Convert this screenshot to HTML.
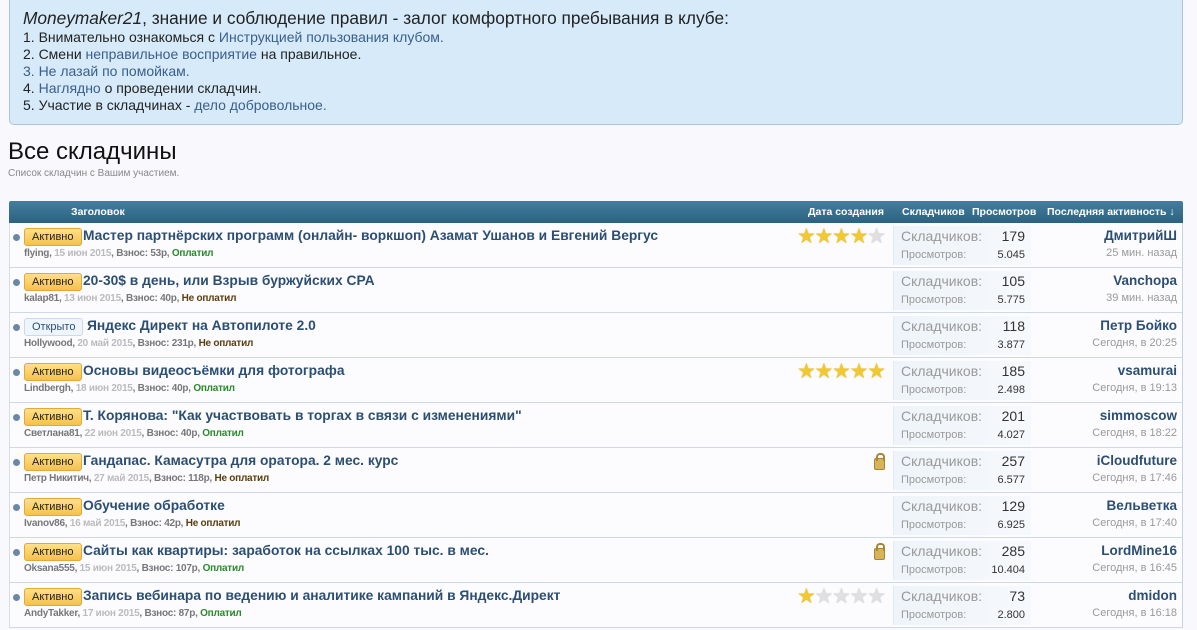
<!DOCTYPE html>
<html><head><meta charset="utf-8"><style>
*{box-sizing:border-box;margin:0;padding:0}
body{width:1197px;height:630px;overflow:hidden;background:#f9f9fd;font-family:"Liberation Sans",Arial,sans-serif;position:relative}
.notice{position:absolute;left:9px;top:-6px;width:1174px;height:131px;background:#d6eaf9;border:1px solid #a9c4dc;border-radius:5px;padding:12px 0 0 13px;color:#222;font-size:14px;line-height:17px}
.notice .first{font-size:17.3px;line-height:22px}
.notice a{color:#3a5f8c;text-decoration:none}
h1{position:absolute;left:8px;top:138px;font-size:24px;font-weight:normal;color:#111}
.sub{position:absolute;left:8px;top:168px;font-size:10px;color:#888}
.hdr{position:absolute;left:9px;top:201px;width:1174px;height:22px;background:linear-gradient(#437f9d,#2c6181);color:#fff;font-size:10.5px;font-weight:bold;border-radius:2px 2px 0 0}
.hdr span{position:absolute;top:5px}
.row{position:absolute;left:9px;width:1174px;height:45px;background:#fcfcff;border-left:1px solid #d4dde8;border-right:1px solid #c5d3e0;border-bottom:1px solid #cfd9e5}
.dot{position:absolute;left:3px;top:11px;width:7px;height:7px;border-radius:50%;background:#6a87a8}
.badge{position:absolute;left:14px;top:5px;height:18px;padding:0 7px;font-size:11px;line-height:16px;border-radius:3px;color:#222;background:linear-gradient(#ffe08a,#f6c14c);border:1px solid #e2a83a}
.badge.open{background:#eef5fc;border:1px solid #c8dbee;color:#2b4e72}
.title{position:absolute;top:5px;font-size:13.8px;font-weight:bold;color:#2b4e72;white-space:nowrap}
.meta{position:absolute;left:14px;top:25px;font-size:10px;letter-spacing:-0.25px;font-weight:bold;color:#777;white-space:nowrap}
.meta .d{color:#bbb}.meta .ok{color:#2a8a2a}.meta .no{color:#5a3d10}
.stats{position:absolute;left:883px;top:3px;width:138px;height:39px;background:linear-gradient(90deg,#eef4fa,#f6f9fc);border-left:1px solid #e3ebf3}
.stats .l1{position:absolute;left:7px;top:2px;font-size:14px;color:#999}
.stats .n1{position:absolute;right:6px;top:2px;font-size:14px;color:#333}
.stats .l2{position:absolute;left:7px;top:23px;font-size:11px;color:#999}
.stats .n2{position:absolute;right:6px;top:23px;font-size:11px;color:#333}
.last{position:absolute;right:5px;top:5px;text-align:right}
.last b{display:block;font-size:13.5px;color:#2b4e72}
.last i{display:block;font-style:normal;font-size:11px;color:#999;margin-top:4px}
.stars{position:absolute;left:787px;top:4px;font-size:21px;line-height:20px;letter-spacing:-1.3px;color:#f2c830;text-shadow:0 0 1px #c99a10}
.stars .e{color:#e0e0e0;text-shadow:0 0 1px #aaa}
.lock{position:absolute;left:864px;top:10px;width:11px;height:12px;background:#d7b45a;border-radius:2px;border:1px solid #a88530}
.lock:before{content:"";position:absolute;left:1px;top:-6px;width:5px;height:6px;border:2px solid #a88530;border-bottom:none;border-radius:4px 4px 0 0}
</style></head><body>
<div class="notice">
<div class="first"><i>Moneymaker21</i>, знание и соблюдение правил - залог комфортного пребывания в клубе:</div>
<div>1. Внимательно ознакомься с <a>Инструкцией пользования клубом.</a></div>
<div>2. Смени <a>неправильное восприятие</a> на правильное.</div>
<div><a>3. Не лазай по помойкам.</a></div>
<div>4. <a>Наглядно</a> о проведении складчин.</div>
<div>5. Участие в складчинах - <a>дело добровольное.</a></div>
</div>
<h1>Все складчины</h1>
<div class="sub">Список складчин с Вашим участием.</div>
<div class="hdr"><span style="left:62px">Заголовок</span><span style="left:799px">Дата создания</span><span style="left:893px">Складчиков</span><span style="left:963px">Просмотров</span><span style="left:1038px">Последняя активность ↓</span></div>

<div class="row" style="top:223px"><div class="dot"></div><div class="badge">Активно</div><div class="title" style="left:73px">Мастер партнёрских программ (онлайн- воркшоп) Азамат Ушанов и Евгений Вергус</div><div class="meta">flying, <span class="d">15 июн 2015</span>, Взнос: 53р, <span class="ok">Оплатил</span></div><div class="stars">★★★★<span class="e">★</span></div><div class="stats"><span class="l1">Складчиков:</span><span class="n1">179</span><span class="l2">Просмотров:</span><span class="n2">5.045</span></div><div class="last"><b>ДмитрийШ</b><i>25 мин. назад</i></div></div>

<div class="row" style="top:268px"><div class="dot"></div><div class="badge">Активно</div><div class="title" style="left:73px">20-30$ в день, или Взрыв буржуйских CPA</div><div class="meta">kalap81, <span class="d">13 июн 2015</span>, Взнос: 40р, <span class="no">Не оплатил</span></div><div class="stats"><span class="l1">Складчиков:</span><span class="n1">105</span><span class="l2">Просмотров:</span><span class="n2">5.775</span></div><div class="last"><b>Vanchopa</b><i>39 мин. назад</i></div></div>

<div class="row" style="top:313px"><div class="dot"></div><div class="badge open">Открыто</div><div class="title" style="left:77px">Яндекс Директ на Автопилоте 2.0</div><div class="meta">Hollywood, <span class="d">20 май 2015</span>, Взнос: 231р, <span class="no">Не оплатил</span></div><div class="stats"><span class="l1">Складчиков:</span><span class="n1">118</span><span class="l2">Просмотров:</span><span class="n2">3.877</span></div><div class="last"><b>Петр Бойко</b><i>Сегодня, в 20:25</i></div></div>

<div class="row" style="top:358px"><div class="dot"></div><div class="badge">Активно</div><div class="title" style="left:73px">Основы видеосъёмки для фотографа</div><div class="meta">Lindbergh, <span class="d">18 июн 2015</span>, Взнос: 40р, <span class="ok">Оплатил</span></div><div class="stars">★★★★★</div><div class="stats"><span class="l1">Складчиков:</span><span class="n1">185</span><span class="l2">Просмотров:</span><span class="n2">2.498</span></div><div class="last"><b>vsamurai</b><i>Сегодня, в 19:13</i></div></div>

<div class="row" style="top:403px"><div class="dot"></div><div class="badge">Активно</div><div class="title" style="left:73px">Т. Корянова: "Как участвовать в торгах в связи с изменениями"</div><div class="meta">Светлана81, <span class="d">22 июн 2015</span>, Взнос: 40р, <span class="ok">Оплатил</span></div><div class="stats"><span class="l1">Складчиков:</span><span class="n1">201</span><span class="l2">Просмотров:</span><span class="n2">4.027</span></div><div class="last"><b>simmoscow</b><i>Сегодня, в 18:22</i></div></div>

<div class="row" style="top:448px"><div class="dot"></div><div class="badge">Активно</div><div class="title" style="left:73px">Гандапас. Камасутра для оратора. 2 мес. курс</div><div class="meta">Петр Никитич, <span class="d">27 май 2015</span>, Взнос: 118р, <span class="no">Не оплатил</span></div><div class="lock"></div><div class="stats"><span class="l1">Складчиков:</span><span class="n1">257</span><span class="l2">Просмотров:</span><span class="n2">6.577</span></div><div class="last"><b>iCloudfuture</b><i>Сегодня, в 17:46</i></div></div>

<div class="row" style="top:493px"><div class="dot"></div><div class="badge">Активно</div><div class="title" style="left:73px">Обучение обработке</div><div class="meta">Ivanov86, <span class="d">16 май 2015</span>, Взнос: 42р, <span class="no">Не оплатил</span></div><div class="stats"><span class="l1">Складчиков:</span><span class="n1">129</span><span class="l2">Просмотров:</span><span class="n2">6.925</span></div><div class="last"><b>Вельветка</b><i>Сегодня, в 17:40</i></div></div>

<div class="row" style="top:538px"><div class="dot"></div><div class="badge">Активно</div><div class="title" style="left:73px">Сайты как квартиры: заработок на ссылках 100 тыс. в мес.</div><div class="meta">Oksana555, <span class="d">15 июн 2015</span>, Взнос: 107р, <span class="ok">Оплатил</span></div><div class="lock"></div><div class="stats"><span class="l1">Складчиков:</span><span class="n1">285</span><span class="l2">Просмотров:</span><span class="n2">10.404</span></div><div class="last"><b>LordMine16</b><i>Сегодня, в 16:45</i></div></div>

<div class="row" style="top:583px"><div class="dot"></div><div class="badge">Активно</div><div class="title" style="left:73px">Запись вебинара по ведению и аналитике кампаний в Яндекс.Директ</div><div class="meta">AndyTakker, <span class="d">17 июн 2015</span>, Взнос: 87р, <span class="ok">Оплатил</span></div><div class="stars">★<span class="e">★★★★</span></div><div class="stats"><span class="l1">Складчиков:</span><span class="n1">73</span><span class="l2">Просмотров:</span><span class="n2">2.800</span></div><div class="last"><b>dmidon</b><i>Сегодня, в 16:18</i></div></div>
</body></html>
